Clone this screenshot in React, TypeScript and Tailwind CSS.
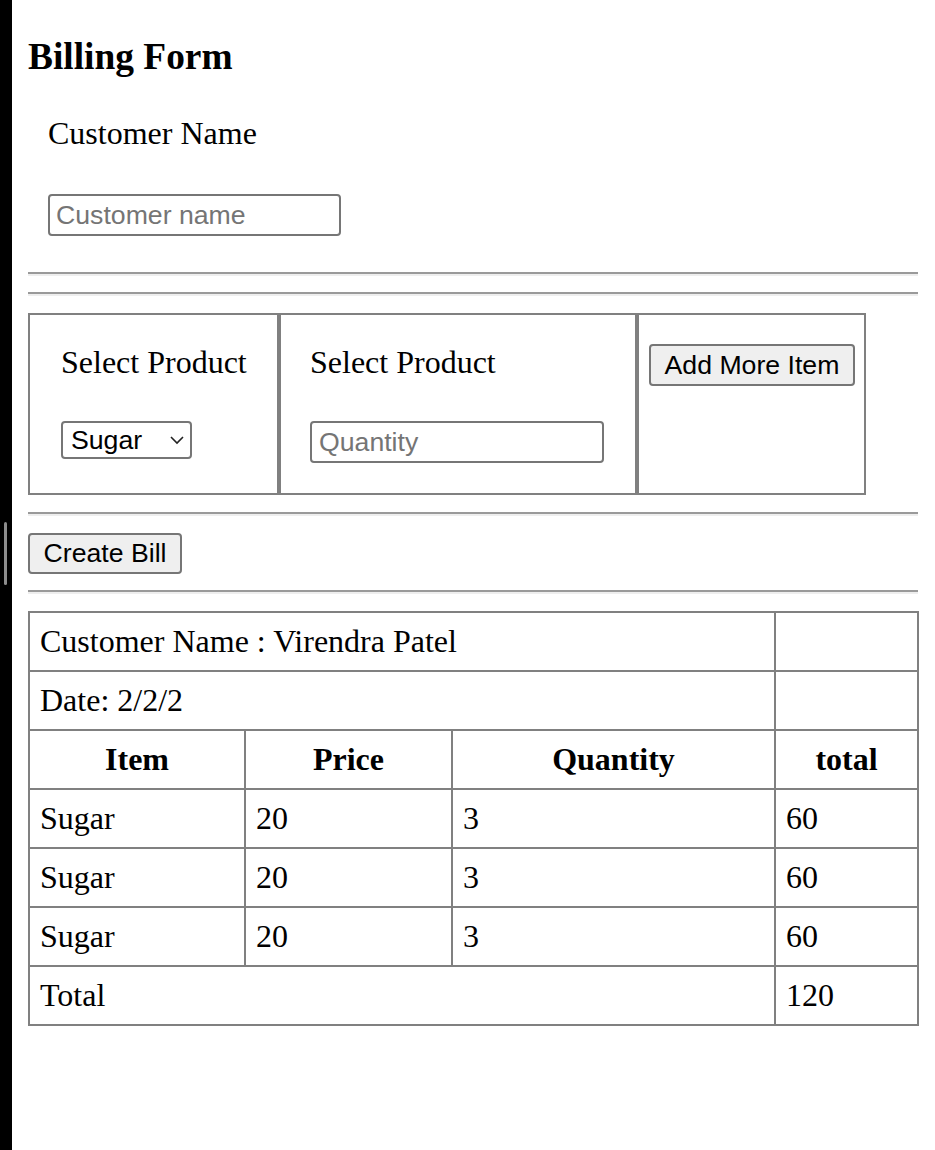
const rows = [
  { item: "Sugar", price: 20, qty: 3, total: 60 },
  { item: "Sugar", price: 20, qty: 3, total: 60 },
  { item: "Sugar", price: 20, qty: 3, total: 60 },
];

const Rule = ({ className = "" }: { className?: string }) => (
  <div className={`h-[4px] w-[890px] border-t-2 border-b-2 border-t-[#9a9a9a] border-b-[#eeeeee] ${className}`} />
);

const cell = "border-2 border-[#808080] px-[10px] py-[10px] text-left font-normal";
const head = "border-2 border-[#808080] p-[10px] text-center font-bold";

export default function App() {
  return (
    <div className="flex min-h-[1150px] bg-white text-black">
      <aside className="w-[12px] shrink-0 bg-black">
        <div className="ml-[4px] mt-[522px] h-[63px] w-[3px] rounded-full bg-[#8c8c8c]" />
      </aside>

      <main className="flex-1 px-[16px] pt-[35px] font-['Liberation_Serif',serif] text-[32px] leading-[37px]">
        <h3 className="text-[37.4px] font-bold leading-[43px]">Billing Form</h3>

        <div className="mt-[37px] px-[20px]">
          <div>Customer Name</div>
          <input
            type="text"
            placeholder="Customer name"
            className="mt-[42px] block h-[42px] w-[293px] rounded-[4px] border-2 border-[#767676] px-[6px] font-['Liberation_Sans',sans-serif] text-[26.67px] placeholder:text-[#757575]"
          />
        </div>

        <Rule className="mt-[36px]" />
        <Rule className="mt-[16px]" />

        <div className="mt-[17px] flex h-[182px]">
          <div className="w-[251px] border-2 border-[#808080] pl-[31px] pt-[29px]">
            <div>Select Product</div>
            <div className="relative mt-[40px] w-[131px]">
              <select className="block h-[38px] w-[131px] appearance-none rounded-[4px] border-2 border-[#767676] bg-white pl-[8px] font-['Liberation_Sans',sans-serif] text-[26.67px] leading-[30px]">
                <option>Sugar</option>
              </select>
              <svg
                className="pointer-events-none absolute right-[8px] top-[15px]"
                width="14"
                height="9"
                viewBox="0 0 14 9"
                fill="none"
                stroke="#222"
                strokeWidth="1.6"
              >
                <path d="M1 1l6 6 6-6" />
              </svg>
            </div>
          </div>

          <div className="w-[358px] border-2 border-[#808080] pl-[29px] pt-[29px]">
            <div>Select Product</div>
            <input
              type="number"
              placeholder="Quantity"
              className="mt-[40px] block h-[42px] w-[294px] rounded-[4px] border-2 border-[#767676] px-[7px] font-['Liberation_Sans',sans-serif] text-[26.67px] placeholder:text-[#757575]"
            />
          </div>

          <div className="w-[229px] border-2 border-[#808080] pl-[10px] pt-[29px]">
            <button className="h-[42px] w-[206px] rounded-[4px] border-2 border-[#767676] bg-[#efefef] font-['Liberation_Sans',sans-serif] text-[26.67px]">
              Add More Item
            </button>
          </div>
        </div>

        <Rule className="mt-[17px]" />

        <button className="mt-[17px] block h-[41px] w-[154px] rounded-[4px] border-2 border-[#767676] bg-[#efefef] font-['Liberation_Sans',sans-serif] text-[26.67px]">
          Create Bill
        </button>

        <Rule className="mt-[16px]" />

        <table className="mt-[17px] w-[889px] table-fixed border-collapse border-2 border-[#808080]">
          <colgroup>
            <col className="w-[216px]" />
            <col className="w-[207px]" />
            <col className="w-[323px]" />
            <col className="w-[143px]" />
          </colgroup>
          <tbody>
            <tr>
              <td colSpan={3} className={cell}>
                Customer Name : Virendra Patel
              </td>
              <td className={cell}></td>
            </tr>
            <tr>
              <td colSpan={3} className={cell}>
                Date: 2/2/2
              </td>
              <td className={cell}></td>
            </tr>
            <tr>
              <th className={head}>Item</th>
              <th className={head}>Price</th>
              <th className={head}>Quantity</th>
              <th className={head}>total</th>
            </tr>
            {rows.map((r, i) => (
              <tr key={i}>
                <td className={cell}>{r.item}</td>
                <td className={cell}>{r.price}</td>
                <td className={cell}>{r.qty}</td>
                <td className={cell}>{r.total}</td>
              </tr>
            ))}
            <tr>
              <td colSpan={3} className={cell}>
                Total
              </td>
              <td className={cell}>120</td>
            </tr>
          </tbody>
        </table>
      </main>
    </div>
  );
}
